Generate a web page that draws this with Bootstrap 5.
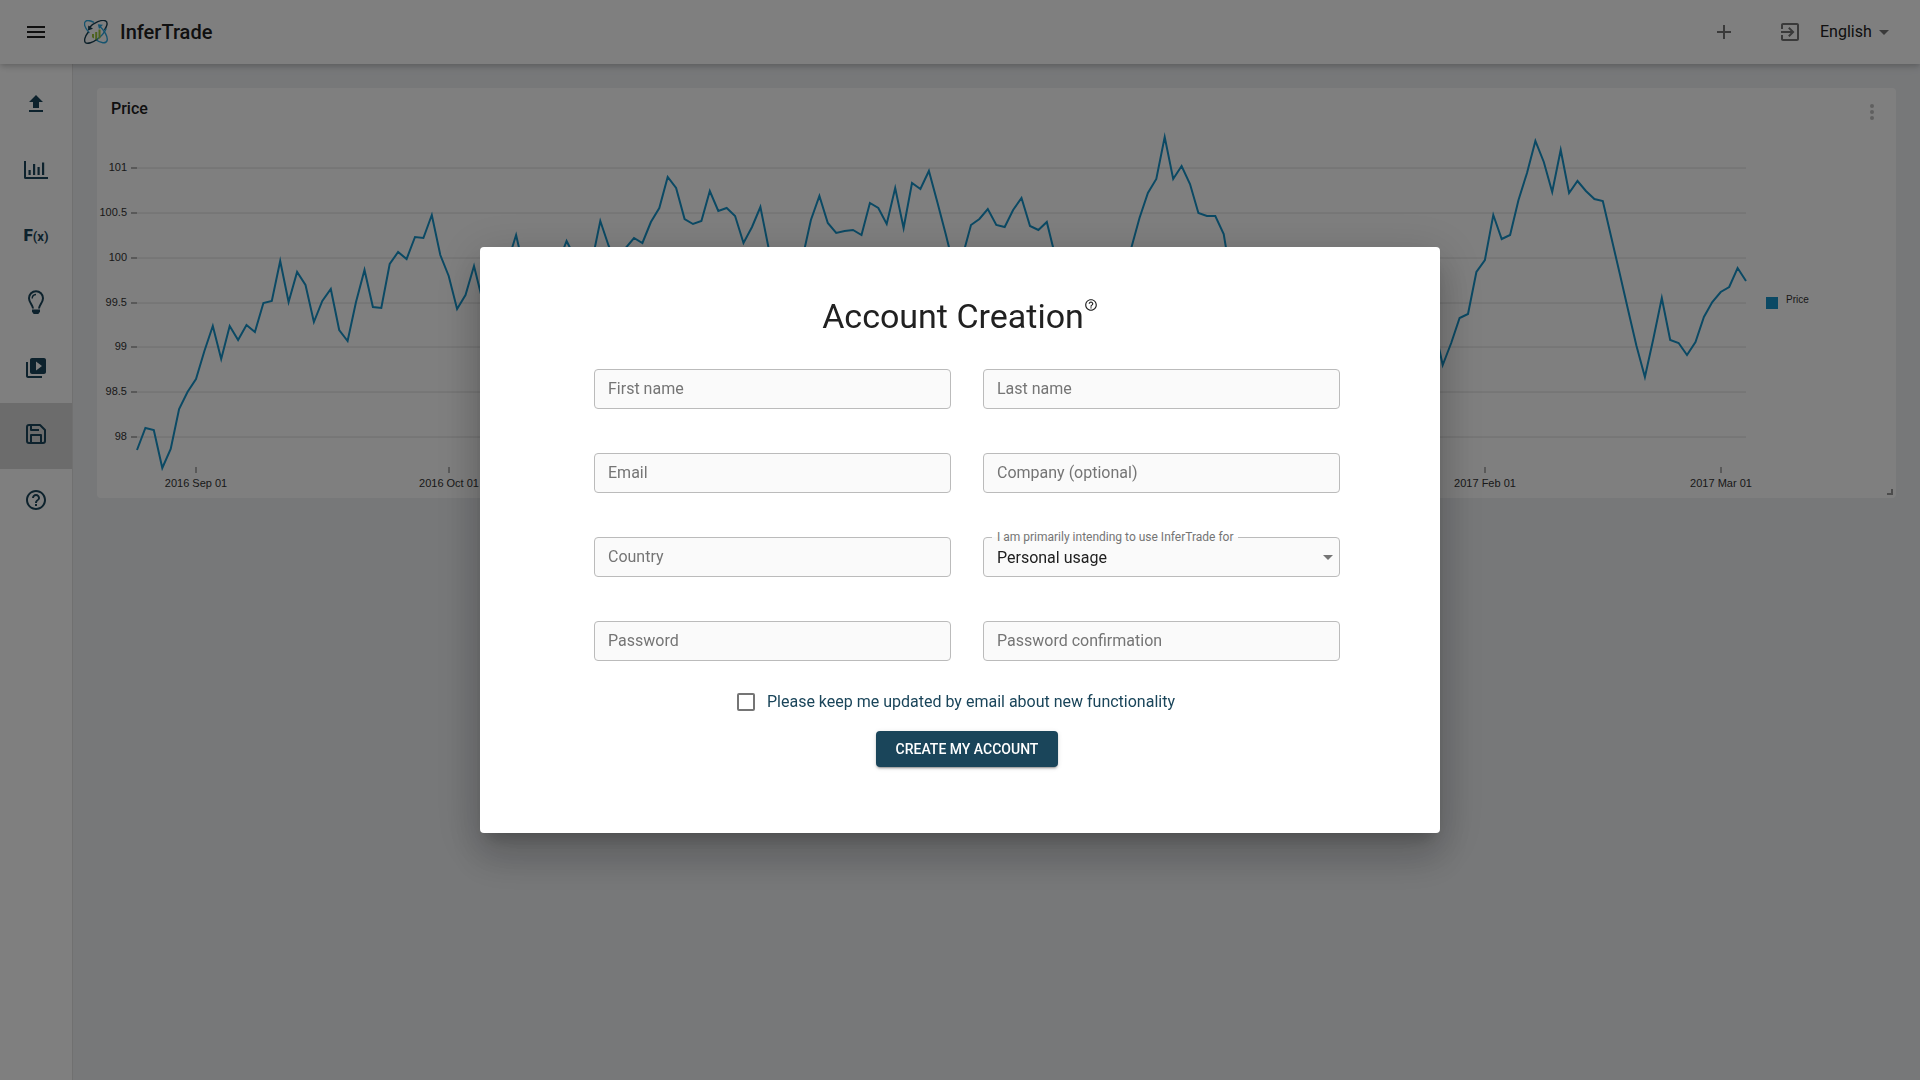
<!DOCTYPE html>
<html lang="en">
<head>
<meta charset="utf-8">
<meta name="viewport" content="width=device-width, initial-scale=1">
<title>InferTrade</title>
<link href="https://cdn.jsdelivr.net/npm/bootstrap@5.3.0/dist/css/bootstrap.min.css" rel="stylesheet">
<style>
  :root { --brand: #1a455a; --muted: #757575; --ink: #212121; }
  body { font-family: Roboto, "Liberation Sans", sans-serif; font-size: 16px; line-height: 24px; color: var(--ink); background: #eef0f3; }
  svg { display: block; }

  .topbar { height: 64px; padding: 0 24px; background: #fff; z-index: 20;
    box-shadow: 0 2px 4px -1px rgba(0,0,0,.1), 0 4px 5px rgba(0,0,0,.06), 0 1px 10px rgba(0,0,0,.12); }
  .icon-btn { padding: 12px; border: 0; background: none; color: var(--muted); }
  .menu-btn { padding: 0; color: var(--ink); }
  .brand-link { margin-left: 36px; gap: 12px; font-size: 20px; font-weight: 500; color: var(--ink); text-decoration: none; }
  .top-actions { gap: 18px; }
  .plain-select { appearance: none; border: 0; background: none; color: var(--ink); padding: 0 24px 0 0; outline: 0; }
  .select-wrap { margin-left: -12px; }
  .select-wrap > svg { position: absolute; right: 0; top: 50%; margin-top: -12px; color: var(--muted); pointer-events: none; }

  .sidebar { flex: 0 0 73px; background: #fff; border-right: 1px solid #e0e0e0; padding-top: 9px; }
  .side-link { height: 66px; padding-top: 19px; color: var(--brand); text-decoration: none; display: flex; justify-content: center; align-items: flex-start; }
  .side-link.active { background: #d9d9d9; }
  .fx { font-weight: 900; font-size: 17px; line-height: 22px; }
  .fx small { font-size: 13px; font-weight: 700; }

  .content-area { padding: 24px; min-width: 0; }
  .chart-card { background: #fff; border-radius: 4px; position: relative; }
  .chart-head { position: absolute; inset: 0 0 auto 0; padding: 9px 12px 0 14px; }
  .chart-head h2 { font-size: 16px; line-height: 24px; font-weight: 500; margin: 0; }
  .chart-head button { padding: 3px 0 0; border: 0; background: none; color: #bebebe; }
  .chart-card .plot { width: 100%; height: auto; font-family: "Liberation Sans", sans-serif; font-size: 11px; }
  .plot text { fill: #333; }

  .modal-dialog { max-width: 960px; }
  .signup { border: 0; border-radius: 4px; padding: 48px 100px 66px 114px;
    box-shadow: 0 11px 15px -7px rgba(0,0,0,.2), 0 24px 38px 3px rgba(0,0,0,.14), 0 9px 46px 8px rgba(0,0,0,.12); }
  .signup-title { margin: 0 14px 32px 0; }
  .signup-title h1 { font-size: 34px; line-height: 42px; font-weight: 400; margin: 0; }
  .help-dot { padding: 3px 0 0; border: 0; background: none; color: var(--ink); }
  .field-grid { --bs-gutter-x: 32px; --bs-gutter-y: 44px; }
  .field { position: relative; }
  .field input, .field select { display: block; width: 100%; height: 40px; padding: 0 14px; border: 1px solid #bbb; border-radius: 4px; background: #fafafa; color: var(--ink); outline: 0; appearance: none; }
  .field select { padding: 1px 13px 0; }
  .field > label { position: absolute; left: 14px; top: 8px; line-height: 24px; color: var(--muted); pointer-events: none; }
  .field input:focus { border-color: var(--brand); }
  .field > .raised { left: 9px; top: -8px; padding: 0 5px; font-size: 12px; line-height: 16px; background: linear-gradient(#fff 50%, #fafafa 50%); }
  .field > svg { position: absolute; right: 0; top: 8px; color: var(--muted); pointer-events: none; }
  .updates { height: 42px; margin-top: 20px; margin-bottom: 8px; padding-right: 22px; gap: 12px; color: var(--brand); }
  .updates input { appearance: none; width: 18px; height: 18px; margin: 0; border: 2px solid var(--muted); border-radius: 2px; }
  .updates input:checked { background: var(--brand); }
  .btn-create { height: 36px; padding: 0 18px; border: 0; border-radius: 4px; font-size: 14px; font-weight: 500; line-height: 24px; min-width: 182px; text-transform: uppercase; color: #fff; background: var(--brand);
    box-shadow: 0 3px 1px -2px rgba(0,0,0,.2), 0 2px 2px rgba(0,0,0,.14), 0 1px 5px rgba(0,0,0,.12); }
  .btn-create:hover { color: #fff; background: #12303f; }
</style>
<script src="https://cdn.jsdelivr.net/npm/bootstrap@5.3.0/dist/js/bootstrap.bundle.min.js" defer></script>
</head>
<body class="d-flex flex-column min-vh-100">

<header class="topbar d-flex align-items-center sticky-top">
  <button type="button" class="icon-btn menu-btn" aria-label="Menu">
    <svg width="24" height="24" viewBox="0 0 24 24" fill="currentColor"><path d="M3 18h18v-2H3v2zm0-5h18v-2H3v2zm0-7v2h18V6H3z"/></svg>
  </button>
  <a href="#" class="brand-link d-flex align-items-center">
    <svg width="24" height="24" viewBox="0 0 24 24" fill="none" stroke-width="1.4" stroke-linecap="round">
      <path d="M5 12.500C1.500 8.500-.3 4.300 1 2 2.200 0 6 .4 9.500 2.200" stroke="#2ba6dc"/>
      <path d="M5.500 7.500C10 2.500 18-.8 21.500.9c2.600 1.400 1.700 5-.7 8.600" stroke="#173f52"/>
      <path d="M15.500 6c5 4.500 8.600 11 7.600 14.500-1 3.600-6.600 2.700-11.100-.8" stroke="#2ba6dc"/>
      <path d="M4 12.500C.8 16.500-.2 20.800 1.300 22.500c2 2 7.700-.1 12.200-3.500" stroke="#173f52"/>
      <path d="M13.500 19c3.800-2.800 7.200-7 8.500-10" stroke="#2ba6dc"/>
      <path d="M4 10.500 4.300 5.500 9 8.800z" fill="#173f52" stroke="none"/>
      <path d="M13.800 4.300 19 4.800 15 9z" fill="#2ba6dc" stroke="none"/>
      <path d="M8 14h2v4.500L8 17.200zM11.200 12h2v7.500h-2zM14.500 9.500h2v8.500l-2 1z" fill="#9bc53d"/>
    </svg>
    <span>InferTrade</span>
  </a>
  <div class="top-actions ms-auto d-flex align-items-center">
    <button type="button" class="icon-btn" aria-label="Add">
      <svg width="24" height="24" viewBox="0 0 24 24" fill="currentColor"><path d="M19 13h-6v6h-2v-6H5v-2h6V5h2v6h6v2z"/></svg>
    </button>
    <button type="button" class="icon-btn" aria-label="Sign in">
      <svg width="24" height="24" viewBox="0 0 24 24" fill="currentColor"><path d="M10.090 15.590L11.500 17l5-5-5-5-1.410 1.410L12.670 11H3v2h9.670l-2.580 2.590zM19 3H5c-1.110 0-2 .9-2 2v4h2V5h14v14H5v-4H3v4c0 1.100.89 2 2 2h14c1.100 0 2-.9 2-2V5c0-1.100-.9-2-2-2z"/></svg>
    </button>
    <div class="select-wrap position-relative">
      <select class="plain-select" aria-label="Language"><option>English</option></select>
      <svg width="24" height="24" viewBox="0 0 24 24" fill="currentColor"><path d="M7 10l5 5 5-5z"/></svg>
    </div>
  </div>
</header>

<div class="d-flex flex-grow-1">
  <nav class="sidebar" aria-label="Main">
    <a href="#" class="side-link" aria-label="Upload"><svg width="24" height="24" viewBox="0 0 24 24" fill="currentColor"><path d="M5 20h14v-2H5v2zm0-10h4v6h6v-6h4l-7-7-7 7z"/></svg></a>
    <a href="#" class="side-link" aria-label="Charts"><svg width="24" height="24" viewBox="0 0 24 24" fill="currentColor"><path d="M0 3h2v16h22v2H1.500A1.500 1.500 0 0 1 0 19.500zM4.500 12h2.200v5H4.500zM9 6h2.200v11H9zM13.500 9h2.200v8h-2.200zM18 4.500h2.200V17H18z"/></svg></a>
    <a href="#" class="side-link" aria-label="Functions"><span class="fx">F<small>(x)</small></span></a>
    <a href="#" class="side-link" aria-label="Ideas"><svg width="24" height="24" viewBox="0 0 24 24" fill="none" stroke="currentColor" stroke-width="2"><path d="M9 18.500C8.800 15 5 12.500 5 8.200a7 7 0 0 1 14 0c0 4.300-3.800 6.800-4 10.300"/><path d="M8.200 8.500A4 4 0 0 1 12 4.500" stroke-width="1.400"/><path d="M8 19.500h8v2.300L14.300 24H9.700L8 21.800z" fill="currentColor" stroke="none"/></svg></a>
    <a href="#" class="side-link" aria-label="Videos"><svg width="24" height="24" viewBox="0 0 24 24" fill="currentColor"><path d="M4 6H2v14c0 1.100.9 2 2 2h14v-2H4V6zm16-4H8c-1.100 0-2 .9-2 2v12c0 1.100.9 2 2 2h12c1.100 0 2-.9 2-2V4c0-1.100-.9-2-2-2zm-8 12.500v-9l6 4.500-6 4.500z"/></svg></a>
    <a href="#" class="side-link active" aria-label="Save"><svg width="24" height="24" viewBox="0 0 24 24" fill="none" stroke="currentColor" stroke-width="2" stroke-linejoin="round"><path d="M19 21H5a2 2 0 0 1-2-2V5a2 2 0 0 1 2-2h11l5 5v11a2 2 0 0 1-2 2z"/><path d="M17 21v-8H7v8M7 3v5h8"/></svg></a>
    <a href="#" class="side-link" aria-label="Help"><svg width="24" height="24" viewBox="0 0 24 24" fill="currentColor"><path d="M11 18h2v-2h-2v2zm1-16C6.480 2 2 6.480 2 12s4.480 10 10 10 10-4.480 10-10S17.520 2 12 2zm0 18c-4.410 0-8-3.590-8-8s3.590-8 8-8 8 3.590 8 8-3.590 8-8 8zm0-14c-2.210 0-4 1.790-4 4h2c0-1.100.9-2 2-2s2 .9 2 2c0 2-3 1.750-3 5h2c0-2.250 3-2.500 3-5 0-2.210-1.790-4-4-4z"/></svg></a>
  </nav>

  <main class="content-area flex-grow-1">
    <section class="chart-card">
      <div class="chart-head d-flex justify-content-between">
        <h2>Price</h2>
        <button type="button" aria-label="Chart options"><svg width="24" height="24" viewBox="0 0 24 24" fill="currentColor"><circle cx="12" cy="6" r="2"/><circle cx="12" cy="12" r="2"/><circle cx="12" cy="18" r="2"/></svg></button>
      </div>
      <svg class="plot" viewBox="0 0 1799 410" role="img" aria-label="Price chart">
        <path d="M40 80H1649M40 125H1649M40 170H1649M40 215H1649M40 259H1649M40 304H1649M40 349H1649" stroke="#dcdcdc"/>
        <path d="M34 80h6M34 125h6M34 170h6M34 215h6M34 259h6M34 304h6M34 349h6M99 379v6M352 379v6M1388 379v6M1624 379v6" stroke="#666"/>
        <g text-anchor="end">
          <text x="30" y="83">101</text><text x="30" y="128">100.5</text><text x="30" y="173">100</text><text x="30" y="218">99.5</text><text x="30" y="262">99</text><text x="30" y="307">98.5</text><text x="30" y="352">98</text>
        </g>
        <g text-anchor="middle">
          <text x="99" y="399">2016 Sep 01</text><text x="352" y="399">2016 Oct 01</text><text x="1388" y="399">2017 Feb 01</text><text x="1624" y="399">2017 Mar 01</text>
        </g>
        <polyline id="price-line" fill="none" stroke="#1693c8" stroke-width="2" stroke-miterlimit="10"/>
        <rect x="1669" y="209" width="12" height="12" fill="#1693c8"/>
        <text x="1689" y="215" font-size="10">Price</text>
        <path d="M1795 401v5h-5" fill="none" stroke="#999" stroke-width="2"/>
      </svg>
    </section>
  </main>
</div>

<div class="modal-backdrop show"></div>
<div class="modal d-block" tabindex="-1" role="dialog" aria-labelledby="signup-title">
  <div class="modal-dialog modal-dialog-centered">
    <form class="modal-content signup">
      <div class="signup-title d-flex justify-content-center align-items-start">
        <h1 id="signup-title">Account Creation</h1>
        <button type="button" class="help-dot" aria-label="Help">
          <svg width="14" height="14" viewBox="0 0 24 24" fill="currentColor"><path d="M11 18h2v-2h-2v2zm1-16C6.480 2 2 6.480 2 12s4.480 10 10 10 10-4.480 10-10S17.520 2 12 2zm0 18c-4.410 0-8-3.590-8-8s3.590-8 8-8 8 3.590 8 8-3.590 8-8 8zm0-14c-2.210 0-4 1.790-4 4h2c0-1.100.9-2 2-2s2 .9 2 2c0 2-3 1.750-3 5h2c0-2.250 3-2.500 3-5 0-2.210-1.790-4-4-4z"/></svg>
        </button>
      </div>
      <div class="row field-grid">
        <div class="col-6"><div class="field"><input id="first" type="text"><label for="first">First name</label></div></div>
        <div class="col-6"><div class="field"><input id="last" type="text"><label for="last">Last name</label></div></div>
        <div class="col-6"><div class="field"><input id="email" type="email"><label for="email">Email</label></div></div>
        <div class="col-6"><div class="field"><input id="company" type="text"><label for="company">Company (optional)</label></div></div>
        <div class="col-6"><div class="field"><input id="country" type="text"><label for="country">Country</label></div></div>
        <div class="col-6"><div class="field"><select id="usage"><option>Personal usage</option></select><label class="raised" for="usage">I am primarily intending to use InferTrade for</label>
          <svg width="24" height="24" viewBox="0 0 24 24" fill="currentColor"><path d="M7 10l5 5 5-5z"/></svg></div></div>
        <div class="col-6"><div class="field"><input id="pw" type="password"><label for="pw">Password</label></div></div>
        <div class="col-6"><div class="field"><input id="pw2" type="password"><label for="pw2">Password confirmation</label></div></div>
      </div>
      <div class="updates d-flex align-items-center justify-content-center">
        <input id="updates" type="checkbox"><label for="updates">Please keep me updated by email about new functionality</label>
      </div>
      <button type="submit" class="btn btn-create align-self-center">Create my account</button>
    </form>
  </div>
</div>

<script>
  // One value per day, 2016-08-25 to 2017-03-04, in plot units from the top of the card.
  const daily = [
    362,340,342,380,361,321,304,291,263,238,271,238,252,237,244,215,213,173,214,184,
    197,234,213,201,242,253,214,182,219,220,176,164,171,149,150,127,167,188,221,207,
    178,212,230,205,174,147,184,200,190,172,175,153,170,188,174,133,158,177,160,150,
    155,134,120,89,100,131,136,133,103,123,120,128,155,139,119,161,190,205,188,170,
    132,108,135,145,143,142,147,115,120,136,100,140,95,101,83,114,146,180,168,137,
    131,121,137,139,122,110,138,142,134,168,195,210,225,232,240,228,210,190,161,130,
    105,91,49,91,78,96,125,128,128,146,197,215,230,226,240,255,248,236,250,262,
    258,244,230,240,252,246,238,250,262,255,240,228,220,214,238,277,255,230,226,184,
    172,127,151,147,112,85,53,74,104,62,105,93,103,111,113,149,185,222,258,289,
    251,210,252,255,267,254,229,214,204,199,180,193
  ];
  const step = 1609 / (daily.length - 1);
  document.getElementById('price-line').setAttribute('points',
    daily.map((y, i) => (40 + i * step).toFixed(1) + ',' + y).join(' '));
</script>
</body>
</html>
